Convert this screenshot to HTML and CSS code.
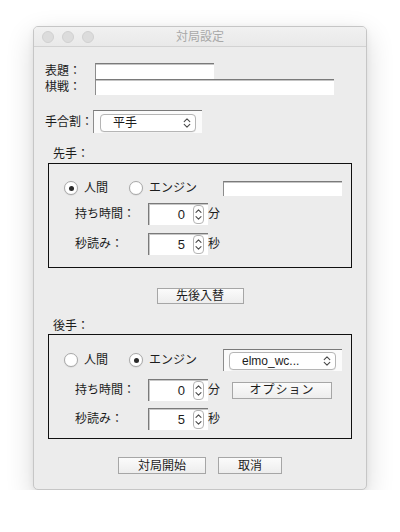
FILE: index.html
```html
<!DOCTYPE html>
<html lang="ja">
<head>
<meta charset="utf-8">
<title>対局設定</title>
<link rel="stylesheet" href="styles.css">
</head>
<body>
<div class="page">
  <div class="window">
    <div class="titlebar">
      <div class="lights"><span class="light"></span><span class="light"></span><span class="light"></span></div>
      <div class="title">対局設定</div>
      <div></div>
    </div>
    <div class="content">
      <div class="meta-row first"><span class="meta-label">表題：</span><span class="field w-title"></span></div>
      <div class="meta-row"><span class="meta-label">棋戦：</span><span class="field w-event"></span></div>
      <div class="handicap-row">
        <span class="handicap-label">手合割：</span>
        <div class="combo combo-handicap">
          <div class="combo-btn">
            <span class="combo-text">平手</span>
            <svg class="chev" width="8" height="12" viewBox="0 0 8 12"><path d="M1.2 4.6 L4 1.8 L6.8 4.6 M1.2 7.4 L4 10.2 L6.8 7.4" fill="none" stroke="#4a4a4a" stroke-width="1.1" stroke-linecap="round" stroke-linejoin="round"/></svg>
          </div>
        </div>
      </div>

      <div class="section-label">先手：</div>
      <div class="player-box">
        <div class="player-row">
          <span class="radio-item r1"><span class="radio on"></span>人間</span>
          <span class="radio-item r2"><span class="radio"></span>エンジン</span>
          <span class="field w-engine"></span>
        </div>
        <div class="time-row">
          <span class="time-label">持ち時間：</span>
          <div class="spin"><span class="spin-value">0</span><span class="stepper"><svg width="9" height="15" viewBox="0 0 9 15"><path d="M2 5.4 L4.5 2.9 L7 5.4 M2 9.6 L4.5 12.1 L7 9.6" fill="none" stroke="#4a4a4a" stroke-width="1.1" stroke-linecap="round" stroke-linejoin="round"/></svg></span></div>
          <span class="unit">分</span>
        </div>
        <div class="time-row second">
          <span class="time-label">秒読み：</span>
          <div class="spin"><span class="spin-value">5</span><span class="stepper"><svg width="9" height="15" viewBox="0 0 9 15"><path d="M2 5.4 L4.5 2.9 L7 5.4 M2 9.6 L4.5 12.1 L7 9.6" fill="none" stroke="#4a4a4a" stroke-width="1.1" stroke-linecap="round" stroke-linejoin="round"/></svg></span></div>
          <span class="unit">秒</span>
        </div>
      </div>

      <div class="button-row swap-row"><button class="btn btn-swap">先後入替</button></div>

      <div class="section-label gote">後手：</div>
      <div class="player-box">
        <div class="player-row engine-row">
          <span class="radio-item r1"><span class="radio"></span>人間</span>
          <span class="radio-item r2"><span class="radio on"></span>エンジン</span>
          <div class="combo combo-engine">
            <div class="combo-btn">
              <span class="combo-text latin">elmo_wc...</span>
              <svg class="chev" width="8" height="12" viewBox="0 0 8 12"><path d="M1.2 4.6 L4 1.8 L6.8 4.6 M1.2 7.4 L4 10.2 L6.8 7.4" fill="none" stroke="#4a4a4a" stroke-width="1.1" stroke-linecap="round" stroke-linejoin="round"/></svg>
            </div>
          </div>
        </div>
        <div class="time-row gote-first">
          <span class="time-label">持ち時間：</span>
          <div class="spin"><span class="spin-value">0</span><span class="stepper"><svg width="9" height="15" viewBox="0 0 9 15"><path d="M2 5.4 L4.5 2.9 L7 5.4 M2 9.6 L4.5 12.1 L7 9.6" fill="none" stroke="#4a4a4a" stroke-width="1.1" stroke-linecap="round" stroke-linejoin="round"/></svg></span></div>
          <span class="unit">分</span>
          <button class="btn btn-option">オプション</button>
        </div>
        <div class="time-row gote-second">
          <span class="time-label">秒読み：</span>
          <div class="spin"><span class="spin-value">5</span><span class="stepper"><svg width="9" height="15" viewBox="0 0 9 15"><path d="M2 5.4 L4.5 2.9 L7 5.4 M2 9.6 L4.5 12.1 L7 9.6" fill="none" stroke="#4a4a4a" stroke-width="1.1" stroke-linecap="round" stroke-linejoin="round"/></svg></span></div>
          <span class="unit">秒</span>
        </div>
      </div>

      <div class="button-row bottom-row">
        <button class="btn btn-start">対局開始</button>
        <button class="btn btn-cancel">取消</button>
      </div>
    </div>
  </div>
</div>
</body>
</html>
```

FILE: styles.css
```css
html, body {
  margin: 0;
  padding: 0;
  background: #ffffff;
}

body {
  font-family: "Liberation Sans", "Noto Sans CJK JP", sans-serif;
  font-size: 12px;
  color: #1c1c1c;
}

.page {
  padding: 26px 0 0 33px;
}

.window {
  width: 334px;
  height: 464px;
  box-sizing: border-box;
  border: 1px solid #c6c6c6;
  border-radius: 5px;
  background: #ececec;
  box-shadow: 0 10px 28px rgba(0, 0, 0, 0.16), 0 2px 6px rgba(0, 0, 0, 0.06);
  overflow: hidden;
}

.titlebar {
  height: 20px;
  box-sizing: border-box;
  border-bottom: 1px solid #d2d2d2;
  background: linear-gradient(#f1f1f1, #e9e9e9);
  display: grid;
  grid-template-columns: 1fr auto 1fr;
  align-items: center;
}

.lights {
  display: flex;
  gap: 8px;
  padding-left: 8px;
}

.light {
  width: 12px;
  height: 12px;
  box-sizing: border-box;
  border-radius: 50%;
  background: #dcdcdc;
  border: 1px solid #d0d0d0;
}

.title {
  color: #a8a8a8;
  font-size: 12px;
  line-height: 16px;
}

.content {
  display: flex;
  flex-direction: column;
}

.meta-row {
  display: flex;
  align-items: center;
  height: 16px;
  margin-left: 11px;
}

.meta-row.first {
  margin-top: 16px;
}

.meta-label {
  width: 50px;
  line-height: 16px;
}

.field {
  display: block;
  height: 16px;
  box-sizing: border-box;
  background: #ffffff;
  border-top: 1px solid #7a7a7a;
  border-left: 1px solid #8c8c8c;
  box-shadow: inset 0 1px 0 #c4c4c4;
}

.w-title { width: 119px; }
.w-event { width: 239px; }
.w-engine { width: 119px; height: 15px; }

.handicap-row {
  display: flex;
  align-items: center;
  height: 23px;
  margin-top: 15px;
  margin-left: 11px;
}

.handicap-label {
  width: 48px;
  line-height: 16px;
}

.combo {
  display: flex;
  align-items: center;
  box-sizing: border-box;
  background: #fbfbfb;
  border-top: 1px solid #7a7a7a;
  border-left: 1px solid #8c8c8c;
}

.combo-handicap {
  width: 109px;
  height: 23px;
  padding: 1px 6px 0 6px;
}

.combo-engine {
  width: 119px;
  height: 22px;
  padding: 1px 6px 0 5px;
}

.combo-btn {
  flex: 1;
  height: 18px;
  box-sizing: border-box;
  border: 1px solid #b5b5b5;
  border-radius: 4px;
  background: #ffffff;
  display: flex;
  align-items: center;
  justify-content: space-between;
  padding: 0 4px 0 12px;
  box-shadow: 0 0.5px 0.5px rgba(0, 0, 0, 0.08);
}

.combo-text {
  line-height: 16px;
}

.combo-text.latin {
  font-size: 12px;
}

.chev {
  display: block;
}

.section-label {
  height: 16px;
  line-height: 16px;
  margin: 13px 0 0 19px;
}

.section-label.gote {
  margin-top: 14px;
}

.player-box {
  width: 304px;
  height: 105px;
  box-sizing: border-box;
  margin: 1px 0 0 14px;
  border: 1px solid #111111;
  display: flex;
  flex-direction: column;
}

.section-label.gote + .player-box {
  margin-top: 0;
}

.player-row {
  display: flex;
  align-items: center;
  height: 20px;
  margin-top: 14px;
  padding-left: 15px;
}

.player-row.engine-row {
  height: 22px;
}

.radio-item {
  display: flex;
  align-items: center;
  line-height: 16px;
}

.r1 { width: 65px; }
.r2 { width: 94px; }

.radio {
  width: 14px;
  height: 14px;
  box-sizing: border-box;
  border-radius: 50%;
  border: 1px solid #a9a9a9;
  background: #ffffff;
  box-shadow: 0 0.5px 1px rgba(0, 0, 0, 0.12);
  margin-right: 6px;
  display: flex;
  align-items: center;
  justify-content: center;
}

.radio.on::after {
  content: "";
  width: 5px;
  height: 5px;
  border-radius: 50%;
  background: #2b2b2b;
}

.time-row {
  display: flex;
  align-items: center;
  height: 22px;
  margin-top: 5px;
  padding-left: 26px;
}

.time-row.second { margin-top: 8px; }
.time-row.gote-first { margin-top: 8px; }
.time-row.gote-second { margin-top: 7px; }

.time-label {
  width: 73px;
  line-height: 16px;
}

.spin {
  width: 60px;
  height: 22px;
  box-sizing: border-box;
  background: #ffffff;
  border-top: 1px solid #7a7a7a;
  border-left: 1px solid #7a7a7a;
  box-shadow: inset 1px 1px 0 #c8c8c8;
  display: flex;
  align-items: center;
  padding-right: 4px;
}

.spin-value {
  flex: 1;
  text-align: right;
  padding-right: 8px;
  font-size: 13px;
  line-height: 16px;
}

.stepper {
  width: 11px;
  height: 19px;
  box-sizing: border-box;
  border: 1px solid #b3b3b3;
  border-radius: 4px;
  background: #ffffff;
  display: flex;
  align-items: center;
  justify-content: center;
}

.stepper svg {
  display: block;
}

.unit {
  line-height: 16px;
}

.button-row {
  display: flex;
  justify-content: center;
  gap: 12px;
}

.swap-row { margin-top: 20px; }
.bottom-row { margin-top: 18px; }

.btn {
  margin: 0;
  padding: 0;
  box-sizing: border-box;
  border: 1px solid #a6a6a6;
  border-radius: 0;
  background: linear-gradient(#fbfbfb, #ededed);
  font-family: "Liberation Sans", "Noto Sans CJK JP", sans-serif;
  font-size: 12px;
  line-height: 14px;
  color: #1c1c1c;
  text-align: center;
}

.btn-swap { width: 87px; height: 16px; }
.btn-start { width: 88px; height: 17px; }
.btn-cancel { width: 64px; height: 17px; }
.btn-option { width: 100px; height: 17px; margin-left: 12px; letter-spacing: 1px; }
```
